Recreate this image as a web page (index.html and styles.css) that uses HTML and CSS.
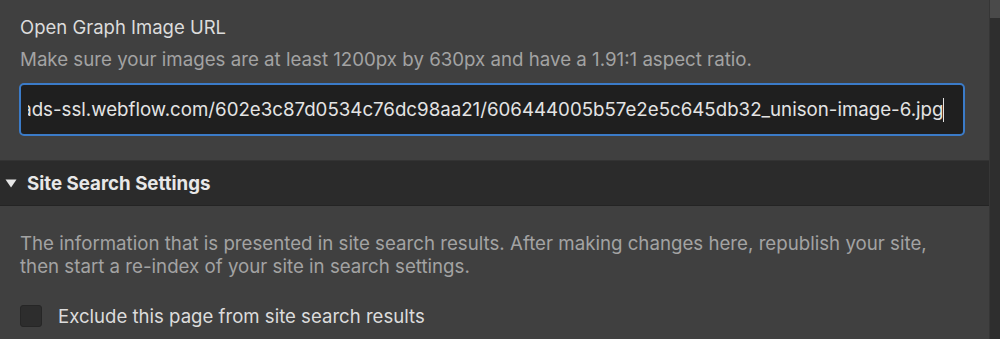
FILE: index.html
```html
<!DOCTYPE html>
<html>
<head>
<meta charset="utf-8">
<link rel="stylesheet" href="styles.css">
</head>
<body>
<div class="app">
  <div class="panel">
    <div class="field">
      <div class="label">Open Graph Image URL</div>
      <div class="help">Make sure your images are at least 1200px by 630px and have a 1.91:1 aspect ratio.</div>
      <div class="input">
        <div class="scroll"><span class="value">https://uploads-ssl.webflow.com/602e3c87d0534c76dc98aa21/606444005b57e2e5c645db32_unison-image-6.jpg</span><span class="caret"></span></div>
      </div>
    </div>
    <div class="section-head">
      <svg class="tri" width="12" height="9" viewBox="0 0 12 9"><path d="M0.5 0.5 H11.5 L6 8.5 Z" fill="#e6e6e6"/></svg>
      <span class="section-title">Site Search Settings</span>
    </div>
    <div class="section-body">
      <p class="desc">The information that is presented in site search results. After making changes here, republish your site, then start a re-index of your site in search settings.</p>
      <label class="check-row"><span class="checkbox"></span><span class="check-label">Exclude this page from site search results</span></label>
    </div>
  </div>
  <div class="scrollbar"><div class="thumb"></div></div>
</div>
</body>
</html>
```
FILE: styles.css
```css
html, body {
  margin: 0;
  padding: 0;
  height: 100%;
  overflow: hidden;
  background: #404040;
  font-family: Inter, "Noto Sans", sans-serif;
}
.app {
  display: flex;
  height: 339px;
}
.panel {
  width: 989px;
  background: #404040;
  display: flex;
  flex-direction: column;
}
.scrollbar {
  flex: 1;
  background: #2e2e2e;
  border-left: 1px solid #363636;
}
.thumb {
  height: 18px;
  background: #4a4a4a;
}
.field {
  padding: 16px 24px 0 19px;
  height: 143px;
  box-sizing: border-box;
}
.label {
  color: #dcdcdc;
  font-size: 18.5px;
  line-height: 22px;
  padding-left: 1px;
}
.help {
  color: #a3a3a3;
  font-size: 18.7px;
  line-height: 22px;
  margin-top: 11px;
  padding-left: 1px;
}
.input {
  margin-top: 12px;
  height: 53px;
  box-sizing: border-box;
  border: 2px solid #3b7bc8;
  border-radius: 5px;
  background: #1f1f1f;
  display: flex;
  align-items: center;
  padding: 0 19px 0 7px;
}
.scroll {
  flex: 1;
  min-width: 0;
  overflow: hidden;
  display: flex;
  align-items: center;
  justify-content: flex-end;
  white-space: nowrap;
}
.value {
  color: #e4e4e4;
  font-size: 18.7px;
  flex-shrink: 0;
}
.caret {
  width: 1.5px;
  height: 24px;
  background: #e4e4e4;
  flex-shrink: 0;
  margin-left: -1px;
}
.section-head {
  margin-top: 17px;
  height: 46px;
  box-sizing: border-box;
  background: #2b2b2b;
  border-top: 1px solid #333;
  border-bottom: 1px solid #242424;
  display: flex;
  align-items: center;
  padding-left: 5px;
}
.tri {
  margin-right: 10px;
}
.section-title {
  color: #e8e8e8;
  font-weight: 700;
  font-size: 18.7px;
}
.section-body {
  padding: 26px 20px 0 20px;
}
.desc {
  margin: 0;
  color: #a3a3a3;
  font-size: 18.7px;
  line-height: 23px;
}
.check-row {
  display: flex;
  align-items: center;
  margin-top: 27px;
}
.checkbox {
  width: 22px;
  height: 22px;
  box-sizing: border-box;
  background: #2d2d2d;
  border: 1px solid #262626;
  border-radius: 3px;
  margin-right: 16px;
}
.check-label {
  color: #dcdcdc;
  font-size: 18.6px;
}
```
